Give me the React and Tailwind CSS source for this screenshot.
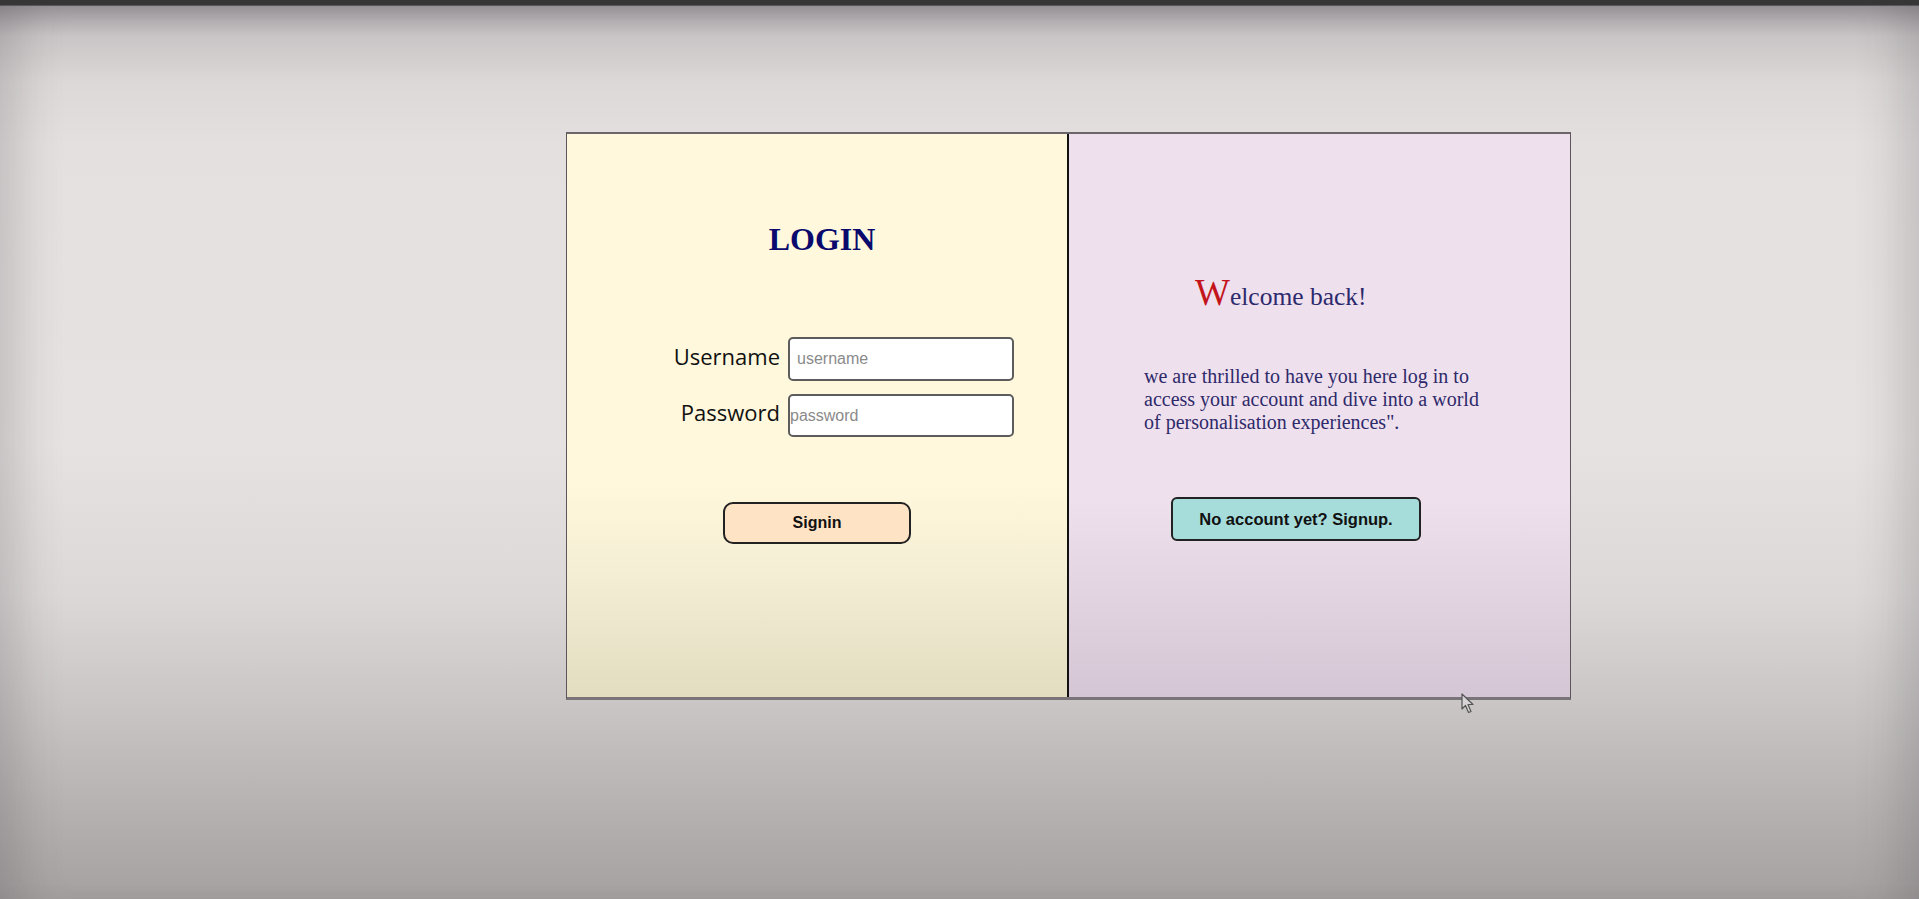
import React from "react";

export default function App() {
  return (
    <div className="relative w-full h-[899px] overflow-hidden flex flex-col">
      <div className="h-[6px] bg-[#363636] border-b border-[#5a565a]" />
      <main className="flex-1 pt-[126px] bg-[linear-gradient(to_bottom,#9a969a_0px,#c9c5c6_30px,#dcd8d8_75px,#e4e0e0_140px,#e6e2e1_440px,#dcd8d8_590px,#c9c5c5_700px,#b6b2b2_800px,#a5a1a1_100%)] shadow-[inset_50px_0_45px_-30px_rgba(60,55,60,0.2),inset_-50px_0_45px_-30px_rgba(60,55,60,0.2)]">
        <div className="ml-[566px] w-[1005px] h-[568px] flex border-t-2 border-t-[#6a666a] border-x border-x-[#5a565a] border-b-[3px] border-b-[#787478]">
          {/* Left panel */}
          <section className="w-[502px] border-r-2 border-r-[#111] flex flex-col bg-[linear-gradient(to_bottom,#fff8dc_0%,#fff8dc_62%,#f4eed4_78%,#e2ddc1_100%)]">
            <h1 className="pt-[89px] pl-[10px] text-center text-[32px] leading-none font-bold text-[#0a0a6e] font-['Liberation_Serif',serif]">
              LOGIN
            </h1>
            <div className="mt-[82px] pl-[73px] flex flex-col gap-[13px] font-['Open_Sans',sans-serif]">
              <div className="flex items-center">
                <label className="w-[140px] mr-2 mb-[6px] text-right text-[22px] leading-none text-[#111]">
                  Username
                </label>
                <input
                  placeholder="username"
                  className="w-[226px] h-[44px] bg-white border-2 border-[#5c5c5c] rounded-[5px] px-[7px] text-[16px] font-['Liberation_Sans',sans-serif] placeholder:text-[#8a8a8a] outline-none"
                />
              </div>
              <div className="flex items-center">
                <label className="w-[140px] mr-2 mb-[7px] text-right text-[22px] leading-none text-[#111]">
                  Password
                </label>
                <input
                  placeholder="password"
                  className="w-[226px] h-[43px] bg-white border-2 border-[#5c5c5c] rounded-[5px] px-0 text-[16px] font-['Liberation_Sans',sans-serif] placeholder:text-[#8a8a8a] outline-none"
                />
              </div>
            </div>
            <div className="mt-[65px] flex justify-center">
              <button className="w-[188px] h-[42px] bg-[#ffe3c5] border-2 border-[#222] rounded-[10px] text-[16px] font-bold text-[#111] font-['Liberation_Sans',sans-serif]">
                Signin
              </button>
            </div>
          </section>

          {/* Right panel */}
          <section className="flex-1 flex flex-col bg-[linear-gradient(to_bottom,#efe0ee_0%,#efe0ee_65%,#e4d5e3_80%,#d5c6d5_100%)] font-['Liberation_Serif',serif]">
            <h2 className="pt-[140px] pl-[126px] text-[25.5px] leading-none text-[#2c2a6c]">
              <span className="text-[37px] text-[#c3141c]">W</span>elcome back!
            </h2>
            <p className="mt-[54px] ml-[75px] w-[345px] text-[20px] leading-[23px] text-[#2e2a6a]">
              we are thrilled to have you here log in to access your account and dive into a world of personalisation experiences".
            </p>
            <div className="mt-[63px] pl-[102px]">
              <button className="w-[250px] h-[44px] bg-[#a6dcda] border-2 border-[#222] rounded-[6px] text-[16.5px] font-bold text-[#111] font-['Liberation_Sans',sans-serif]">
                No account yet? Signup.
              </button>
            </div>
          </section>
        </div>
      </main>

      {/* mouse cursor */}
      <svg className="absolute left-[1461px] top-[693px]" width="14" height="22" viewBox="0 0 14 22">
        <path d="M1 1 L1 16 L4.5 12.5 L7.5 19.5 L10 18.5 L7 11.5 L12 11.5 Z" fill="#d8d4d6" stroke="#555" strokeWidth="1.2" strokeLinejoin="round" />
      </svg>
    </div>
  );
}
